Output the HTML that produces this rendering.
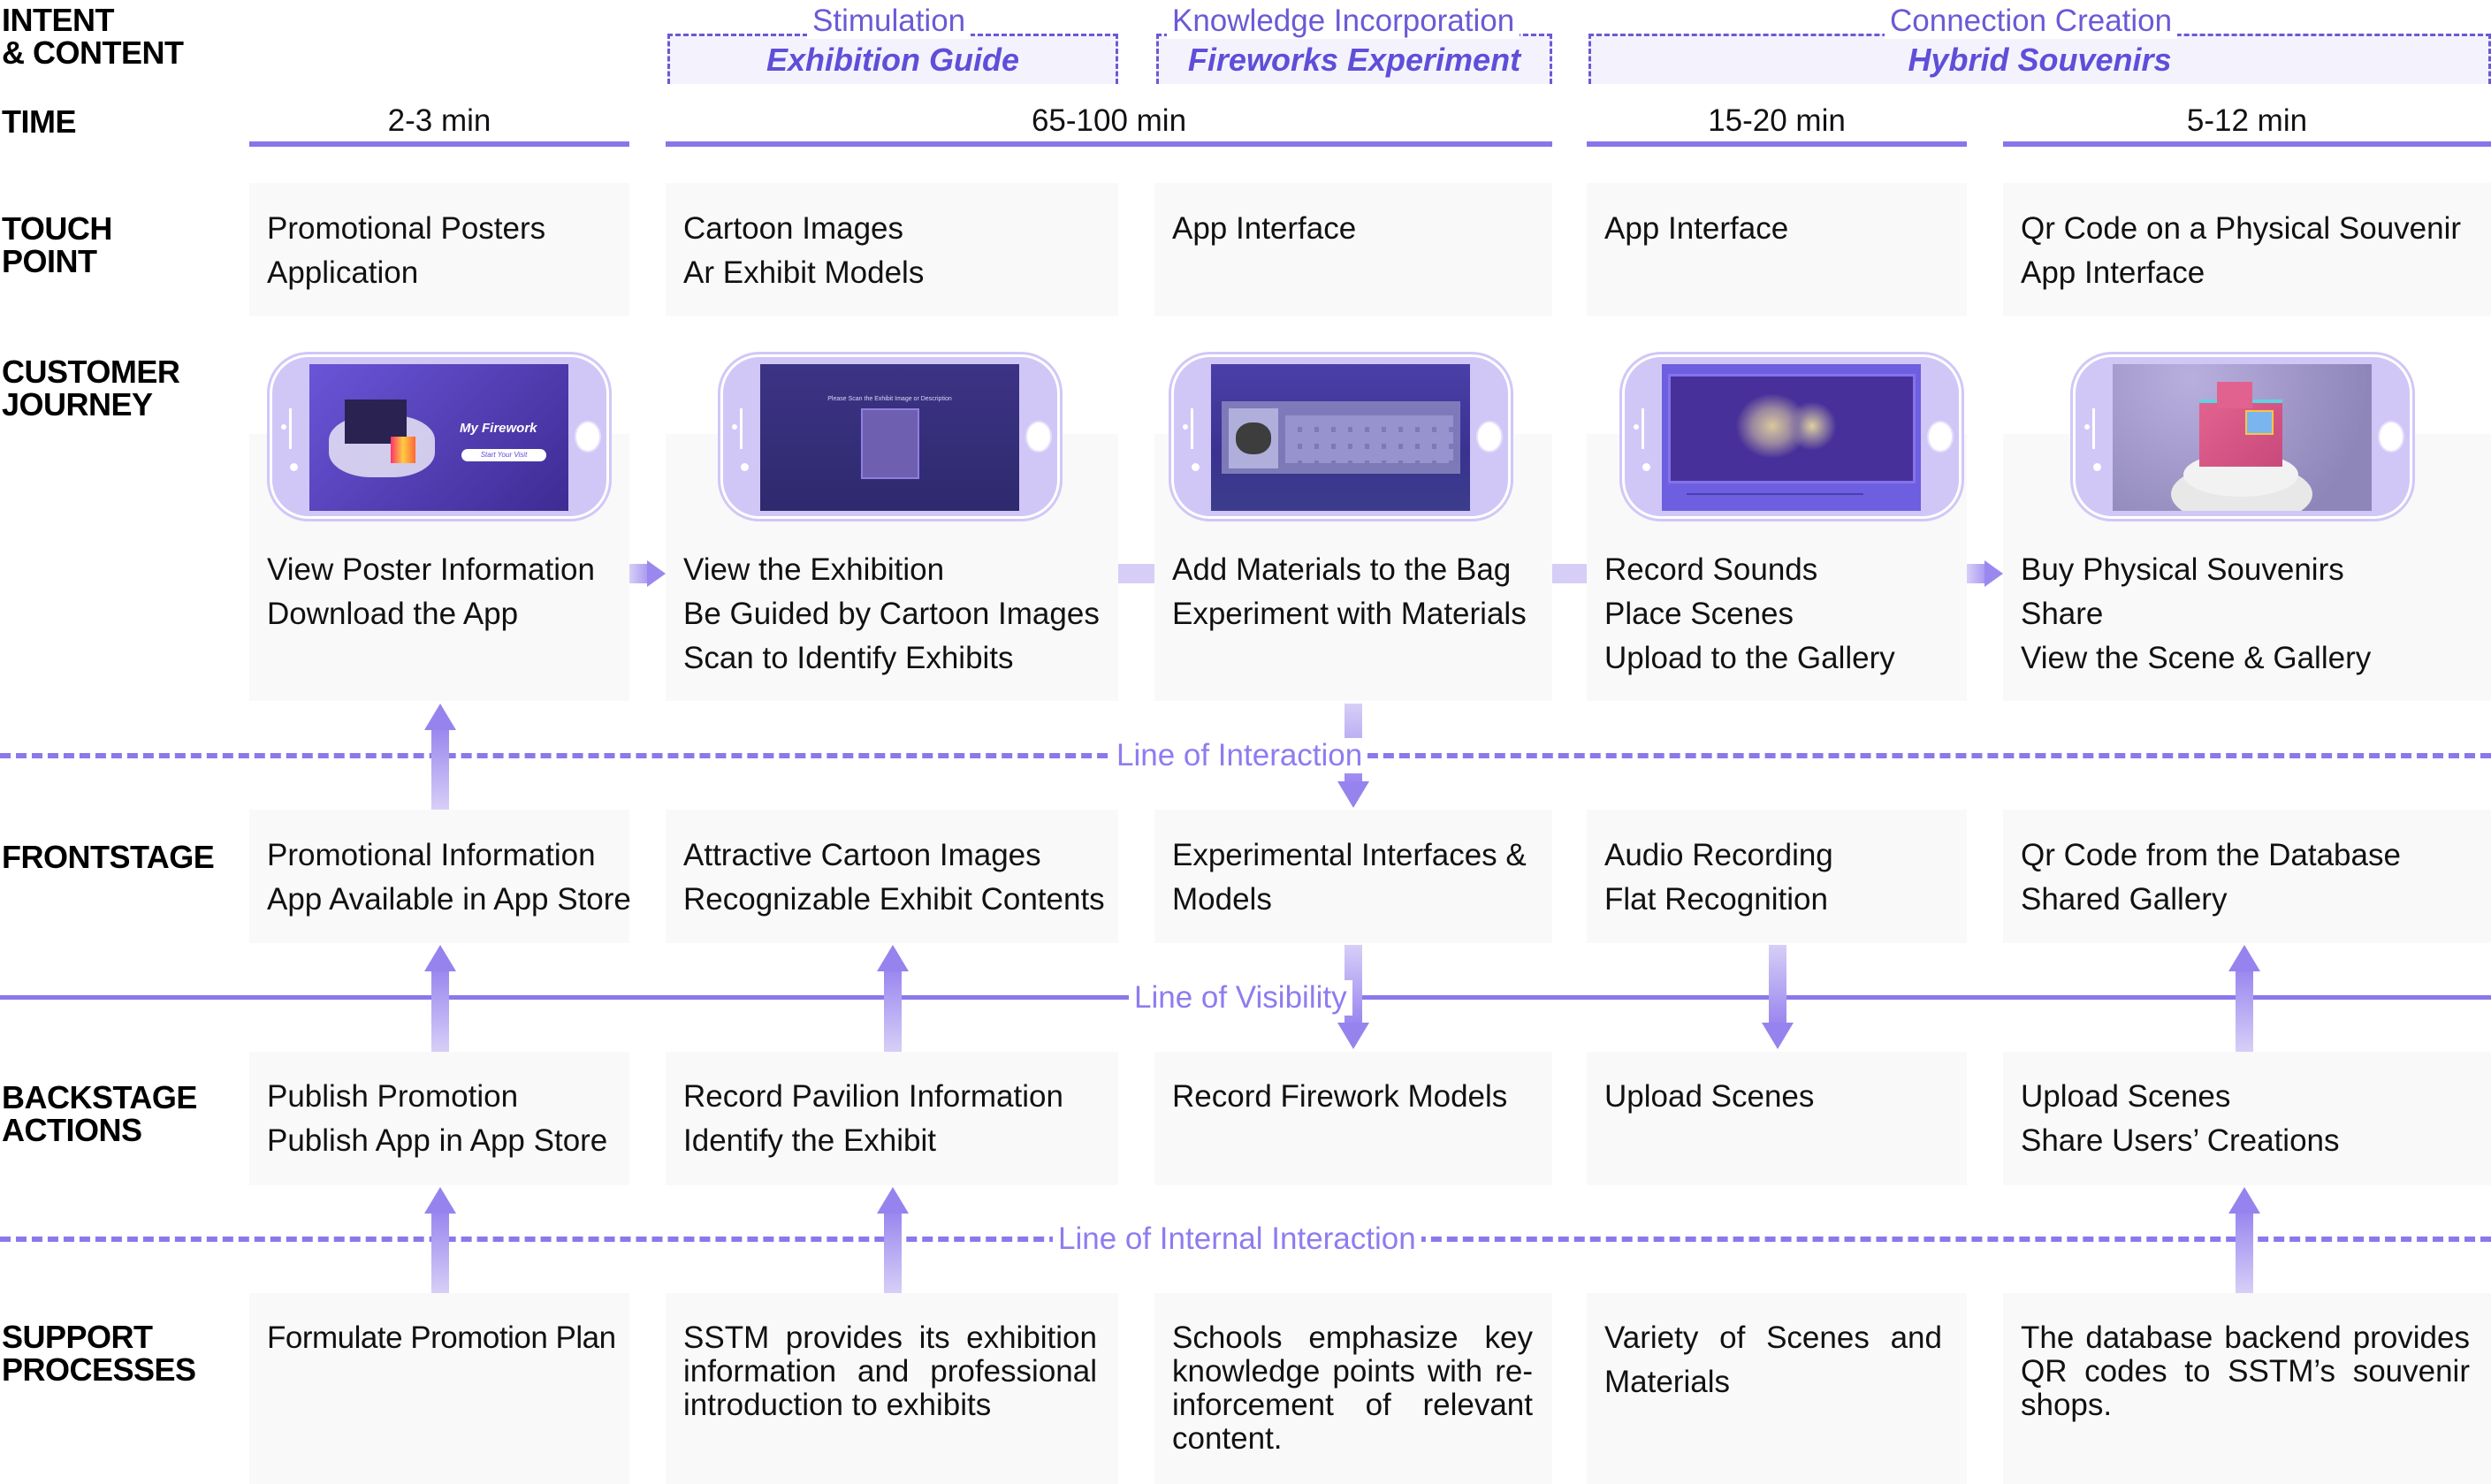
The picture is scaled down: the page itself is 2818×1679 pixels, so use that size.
<!DOCTYPE html>
<html><head><meta charset="utf-8">
<style>
*{margin:0;padding:0;box-sizing:border-box}
body{width:2818px;height:1679px;background:#fff;position:relative;overflow:hidden;font-family:"Liberation Sans",Arial,sans-serif;color:#111}
.a{position:absolute}
.lbl{position:absolute;left:2px;font-weight:bold;font-size:36px;line-height:37px;color:#000;letter-spacing:-0.5px}
.box{position:absolute;background:#f9f9f9}
.t{position:absolute;font-size:35px;line-height:50px;color:#111;white-space:nowrap}
.time{position:absolute;top:117px;font-size:35px;text-align:center;color:#111}
.tl{position:absolute;top:160px;height:6px;background:#8775ea}
.hdr{position:absolute;top:38px;height:57px;background:#f4f3fd;border:3px dashed #6a5ad6;border-bottom:none}
.ht{position:absolute;top:4px;font-size:35px;color:#6a5ad6;background:#fff;padding:0 6px;line-height:40px;white-space:nowrap}
.hb{position:absolute;top:47px;font-size:36px;font-weight:bold;font-style:italic;color:#5f4ed9;text-align:center;white-space:nowrap}
.dash{position:absolute;left:0;width:2818px;height:0;border-top:6px dashed #8a78ec}
.linelab{position:absolute;font-size:35px;color:#8e7cf0;background:#fff;padding:0 6px;line-height:40px;white-space:nowrap}
.up,.dn{position:absolute;width:40px}
.up .s{position:absolute;left:10px;top:28px;bottom:0;width:20px;background:linear-gradient(#9a86ef,#d7cff7)}
.up .h{position:absolute;left:2px;top:0;width:0;height:0;border-left:18px solid transparent;border-right:18px solid transparent;border-bottom:30px solid #9783ee}
.dn .s{position:absolute;left:10px;top:0;bottom:28px;width:20px;background:linear-gradient(#d7cff7,#9a86ef)}
.dn .h{position:absolute;left:2px;bottom:0;width:0;height:0;border-left:18px solid transparent;border-right:18px solid transparent;border-top:30px solid #9783ee}
.phone{position:absolute;top:401px;width:384px;height:186px;background:#d1c7f7;border:3px solid #fff;outline:3px solid #d1c7f7;border-radius:44px}
.scr{position:absolute;left:42px;top:8px;width:293px;height:166px;overflow:hidden}
.btn{position:absolute;right:6px;top:72px;width:30px;height:36px;border-radius:50%;background:#fff;border:2px solid #e6e0fc}
.sp1{position:absolute;left:19px;top:58px;width:3px;height:46px;background:#fff}
.sp2{position:absolute;left:10px;top:76px;width:6px;height:6px;border-radius:50%;background:#fff}
.sp3{position:absolute;left:20px;top:120px;width:9px;height:9px;border-radius:50%;background:#fff}
.sup{position:absolute;font-size:35px;line-height:38px;color:#111;letter-spacing:0}
.sup span{display:block;text-align:justify;text-align-last:justify;white-space:nowrap}
.sup span.l{text-align-last:left}
</style></head><body>

<div class="lbl" style="top:4px">INTENT<br>&amp; CONTENT</div>
<div class="lbl" style="top:119px">TIME</div>
<div class="lbl" style="top:240px">TOUCH<br>POINT</div>
<div class="lbl" style="top:402px">CUSTOMER<br>JOURNEY</div>
<div class="lbl" style="top:951px">FRONTSTAGE</div>
<div class="lbl" style="top:1223px">BACKSTAGE<br>ACTIONS</div>
<div class="lbl" style="top:1494px">SUPPORT<br>PROCESSES</div>

<div class="hdr" style="left:755px;width:510px"></div>
<div class="ht" style="left:913px">Stimulation</div>
<div class="hb" style="left:755px;width:510px">Exhibition Guide</div>
<div class="hdr" style="left:1308px;width:448px"></div>
<div class="ht" style="left:1320px">Knowledge Incorporation</div>
<div class="hb" style="left:1308px;width:448px">Fireworks Experiment</div>
<div class="hdr" style="left:1797px;width:1021px"></div>
<div class="ht" style="left:2132px">Connection Creation</div>
<div class="hb" style="left:1797px;width:1021px">Hybrid Souvenirs</div>

<div class="time" style="left:282px;width:430px">2-3 min</div>
<div class="tl" style="left:282px;width:430px"></div>
<div class="time" style="left:753px;width:1003px">65-100 min</div>
<div class="tl" style="left:753px;width:1003px"></div>
<div class="time" style="left:1795px;width:430px">15-20 min</div>
<div class="tl" style="left:1795px;width:430px"></div>
<div class="time" style="left:2266px;width:552px">5-12 min</div>
<div class="tl" style="left:2266px;width:552px"></div>

<div class="box" style="left:282px;top:207px;width:430px;height:151px"></div>
<div class="box" style="left:753px;top:207px;width:512px;height:151px"></div>
<div class="box" style="left:1306px;top:207px;width:450px;height:151px"></div>
<div class="box" style="left:1795px;top:207px;width:430px;height:151px"></div>
<div class="box" style="left:2266px;top:207px;width:552px;height:151px"></div>
<div class="t" style="left:302px;top:234px">Promotional Posters<br>Application</div>
<div class="t" style="left:773px;top:234px">Cartoon Images<br>Ar Exhibit Models</div>
<div class="t" style="left:1326px;top:234px">App Interface</div>
<div class="t" style="left:1815px;top:234px">App Interface</div>
<div class="t" style="left:2286px;top:234px">Qr Code on a Physical Souvenir<br>App Interface</div>

<div class="box" style="left:282px;top:491px;width:430px;height:302px"></div>
<div class="box" style="left:753px;top:491px;width:512px;height:302px"></div>
<div class="box" style="left:1306px;top:491px;width:450px;height:302px"></div>
<div class="box" style="left:1795px;top:491px;width:430px;height:302px"></div>
<div class="box" style="left:2266px;top:491px;width:552px;height:302px"></div>
<div class="t" style="left:302px;top:620px">View Poster Information<br>Download the App</div>
<div class="t" style="left:773px;top:620px">View the Exhibition<br>Be Guided by Cartoon Images<br>Scan to Identify Exhibits</div>
<div class="t" style="left:1326px;top:620px">Add Materials to the Bag<br>Experiment with Materials</div>
<div class="t" style="left:1815px;top:620px">Record Sounds<br>Place Scenes<br>Upload to the Gallery</div>
<div class="t" style="left:2286px;top:620px">Buy Physical Souvenirs<br>Share<br>View the Scene &amp; Gallery</div>

<div class="a" style="left:712px;top:638px;width:22px;height:22px;background:linear-gradient(90deg,#d7cff7,#a896f0)"></div>
<div class="a" style="left:732px;top:634px;width:0;height:0;border-top:15px solid transparent;border-bottom:15px solid transparent;border-left:21px solid #9b88ef"></div>
<div class="a" style="left:1265px;top:638px;width:41px;height:22px;background:#d6cef7"></div>
<div class="a" style="left:1756px;top:638px;width:39px;height:22px;background:#d6cef7"></div>
<div class="a" style="left:2225px;top:638px;width:22px;height:22px;background:linear-gradient(90deg,#d7cff7,#a896f0)"></div>
<div class="a" style="left:2245px;top:634px;width:0;height:0;border-top:15px solid transparent;border-bottom:15px solid transparent;border-left:21px solid #9b88ef"></div>

<div class="phone" style="left:305px"><div class="sp1"></div><div class="sp2"></div><div class="sp3"></div><div class="btn"></div>
 <div class="scr" style="background:linear-gradient(135deg,#6a55d8,#3f2b93)">
  <div class="a" style="left:22px;top:58px;width:120px;height:70px;border-radius:40%;background:#e8e4f6;opacity:.85"></div>
  <div class="a" style="left:40px;top:40px;width:70px;height:50px;background:#2a2250"></div>
  <div class="a" style="left:92px;top:82px;width:28px;height:30px;background:linear-gradient(90deg,#f36,#fc4,#f63)"></div>
  <div class="a" style="left:170px;top:64px;color:#fff;font-size:15px;font-weight:bold;font-style:italic">My Firework</div>
  <div class="a" style="left:172px;top:96px;width:96px;height:14px;border-radius:7px;background:#fff;color:#5a48d6;font-size:8px;text-align:center;line-height:14px;font-style:italic">Start Your Visit</div>
 </div></div>
<div class="phone" style="left:815px"><div class="sp1"></div><div class="sp2"></div><div class="sp3"></div><div class="btn"></div>
 <div class="scr" style="background:linear-gradient(#3d3385,#2e2a6e)">
  <div class="a" style="left:0;width:293px;top:36px;text-align:center;color:#dcd7f5;font-size:7px">Please Scan the Exhibit Image or Description</div>
  <div class="a" style="left:114px;top:50px;width:66px;height:80px;background:#6e5fb0;border:2px solid #8f7fe0"></div>
 </div></div>
<div class="phone" style="left:1325px"><div class="sp1"></div><div class="sp2"></div><div class="sp3"></div><div class="btn"></div>
 <div class="scr" style="background:linear-gradient(#4a3fa8,#3a3290 60%,#3b3d8c)">
  <div class="a" style="left:12px;top:42px;width:270px;height:82px;background:#8a86c0;opacity:.85"></div>
  <div class="a" style="left:20px;top:50px;width:56px;height:68px;background:#b0aedb"></div>
  <div class="a" style="left:28px;top:66px;width:40px;height:36px;border-radius:45%;background:#3d3d3d"></div>
  <div class="a" style="left:84px;top:58px;width:190px;height:54px;background:repeating-linear-gradient(90deg,#9d9ad4 0 14px,transparent 14px 19px),repeating-linear-gradient(#9d9ad4 0 13px,transparent 13px 19px);opacity:.8"></div>
 </div></div>
<div class="phone" style="left:1835px"><div class="sp1"></div><div class="sp2"></div><div class="sp3"></div><div class="btn"></div>
 <div class="scr" style="background:#6d5fe0">
  <div class="a" style="left:7px;top:11px;width:280px;height:124px;background:#47309a;border:3px solid #8473ea"></div>
  <div class="a" style="left:80px;top:30px;width:90px;height:80px;border-radius:50%;background:radial-gradient(#d8c89c 0,#9b88a0 35%,transparent 65%)"></div>
  <div class="a" style="left:140px;top:40px;width:60px;height:60px;border-radius:50%;background:radial-gradient(#e0d0a0 0,#8a7aa0 35%,transparent 65%)"></div>
  <div class="a" style="left:28px;top:146px;width:200px;height:2px;background:#4a3fb0"></div>
 </div></div>
<div class="phone" style="left:2345px"><div class="sp1"></div><div class="sp2"></div><div class="sp3"></div><div class="btn"></div>
 <div class="scr" style="background:radial-gradient(circle at 30% 10%,#b9afdf,#8e86b8 80%)">
  <div class="a" style="left:66px;top:112px;width:160px;height:70px;border-radius:50%;background:#e8e8e8"></div>
  <div class="a" style="left:80px;top:100px;width:130px;height:50px;border-radius:50%;background:#f2f2f2"></div>
  <div class="a" style="left:98px;top:40px;width:94px;height:76px;background:linear-gradient(135deg,#e2628f,#c84a7b);border-top:4px solid #5fd4de"></div>
  <div class="a" style="left:118px;top:20px;width:40px;height:30px;background:#e2628f"></div>
  <div class="a" style="left:150px;top:52px;width:32px;height:28px;background:#7ab5f0;border:2px solid #f5c842"></div>
 </div></div>

<div class="dash" style="top:852px"></div>
<div class="a" style="left:0;top:1126px;width:2818px;height:5px;background:#8a78ec"></div>
<div class="dash" style="top:1399px"></div>

<div class="box" style="left:282px;top:916px;width:430px;height:151px"></div>
<div class="box" style="left:753px;top:916px;width:512px;height:151px"></div>
<div class="box" style="left:1306px;top:916px;width:450px;height:151px"></div>
<div class="box" style="left:1795px;top:916px;width:430px;height:151px"></div>
<div class="box" style="left:2266px;top:916px;width:552px;height:151px"></div>
<div class="t" style="left:302px;top:943px">Promotional Information<br>App Available in App Store</div>
<div class="t" style="left:773px;top:943px">Attractive Cartoon Images<br>Recognizable Exhibit Contents</div>
<div class="t" style="left:1326px;top:943px">Experimental Interfaces &amp;<br>Models</div>
<div class="t" style="left:1815px;top:943px">Audio Recording<br>Flat Recognition</div>
<div class="t" style="left:2286px;top:943px">Qr Code from the Database<br>Shared Gallery</div>

<div class="box" style="left:282px;top:1190px;width:430px;height:151px"></div>
<div class="box" style="left:753px;top:1190px;width:512px;height:151px"></div>
<div class="box" style="left:1306px;top:1190px;width:450px;height:151px"></div>
<div class="box" style="left:1795px;top:1190px;width:430px;height:151px"></div>
<div class="box" style="left:2266px;top:1190px;width:552px;height:151px"></div>
<div class="t" style="left:302px;top:1216px">Publish Promotion<br>Publish App in App Store</div>
<div class="t" style="left:773px;top:1216px">Record Pavilion Information<br>Identify the Exhibit</div>
<div class="t" style="left:1326px;top:1216px">Record Firework Models</div>
<div class="t" style="left:1815px;top:1216px">Upload Scenes</div>
<div class="t" style="left:2286px;top:1216px">Upload Scenes<br>Share Users’ Creations</div>

<div class="box" style="left:282px;top:1463px;width:430px;height:216px"></div>
<div class="box" style="left:753px;top:1463px;width:512px;height:216px"></div>
<div class="box" style="left:1306px;top:1463px;width:450px;height:216px"></div>
<div class="box" style="left:1795px;top:1463px;width:430px;height:216px"></div>
<div class="box" style="left:2266px;top:1463px;width:552px;height:216px"></div>
<div class="sup" style="left:302px;top:1495px;letter-spacing:-0.5px;white-space:nowrap">Formulate Promotion Plan</div>
<div class="sup" style="left:773px;top:1495px;width:468px"><span>SSTM provides its exhibition</span><span>information and professional</span><span class="l">introduction to exhibits</span></div>
<div class="sup" style="left:1326px;top:1495px;width:408px"><span>Schools emphasize key</span><span>knowledge points with re-</span><span>inforcement of relevant</span><span class="l">content.</span></div>
<div class="sup" style="left:1815px;top:1489px;width:382px;line-height:50px"><span>Variety of Scenes and</span><span class="l">Materials</span></div>
<div class="sup" style="left:2286px;top:1495px;width:508px"><span>The database backend provides</span><span>QR codes to SSTM’s souvenir</span><span class="l">shops.</span></div>

<div class="up" style="left:478px;top:796px;height:120px"><div class="s"></div><div class="h"></div></div>
<div class="up" style="left:478px;top:1069px;height:121px"><div class="s"></div><div class="h"></div></div>
<div class="up" style="left:478px;top:1343px;height:120px"><div class="s"></div><div class="h"></div></div>
<div class="up" style="left:990px;top:1069px;height:121px"><div class="s"></div><div class="h"></div></div>
<div class="up" style="left:990px;top:1343px;height:120px"><div class="s"></div><div class="h"></div></div>
<div class="dn" style="left:1511px;top:796px;height:118px"><div class="s"></div><div class="h"></div></div>
<div class="dn" style="left:1511px;top:1069px;height:118px"><div class="s"></div><div class="h"></div></div>
<div class="dn" style="left:1991px;top:1069px;height:118px"><div class="s"></div><div class="h"></div></div>
<div class="up" style="left:2519px;top:1069px;height:121px"><div class="s"></div><div class="h"></div></div>
<div class="up" style="left:2519px;top:1343px;height:120px"><div class="s"></div><div class="h"></div></div>

<div class="linelab" style="left:1257px;top:835px">Line of Interaction</div>
<div class="linelab" style="left:1277px;top:1109px">Line of Visibility</div>
<div class="linelab" style="left:1191px;top:1382px">Line of Internal Interaction</div>

</body></html>
